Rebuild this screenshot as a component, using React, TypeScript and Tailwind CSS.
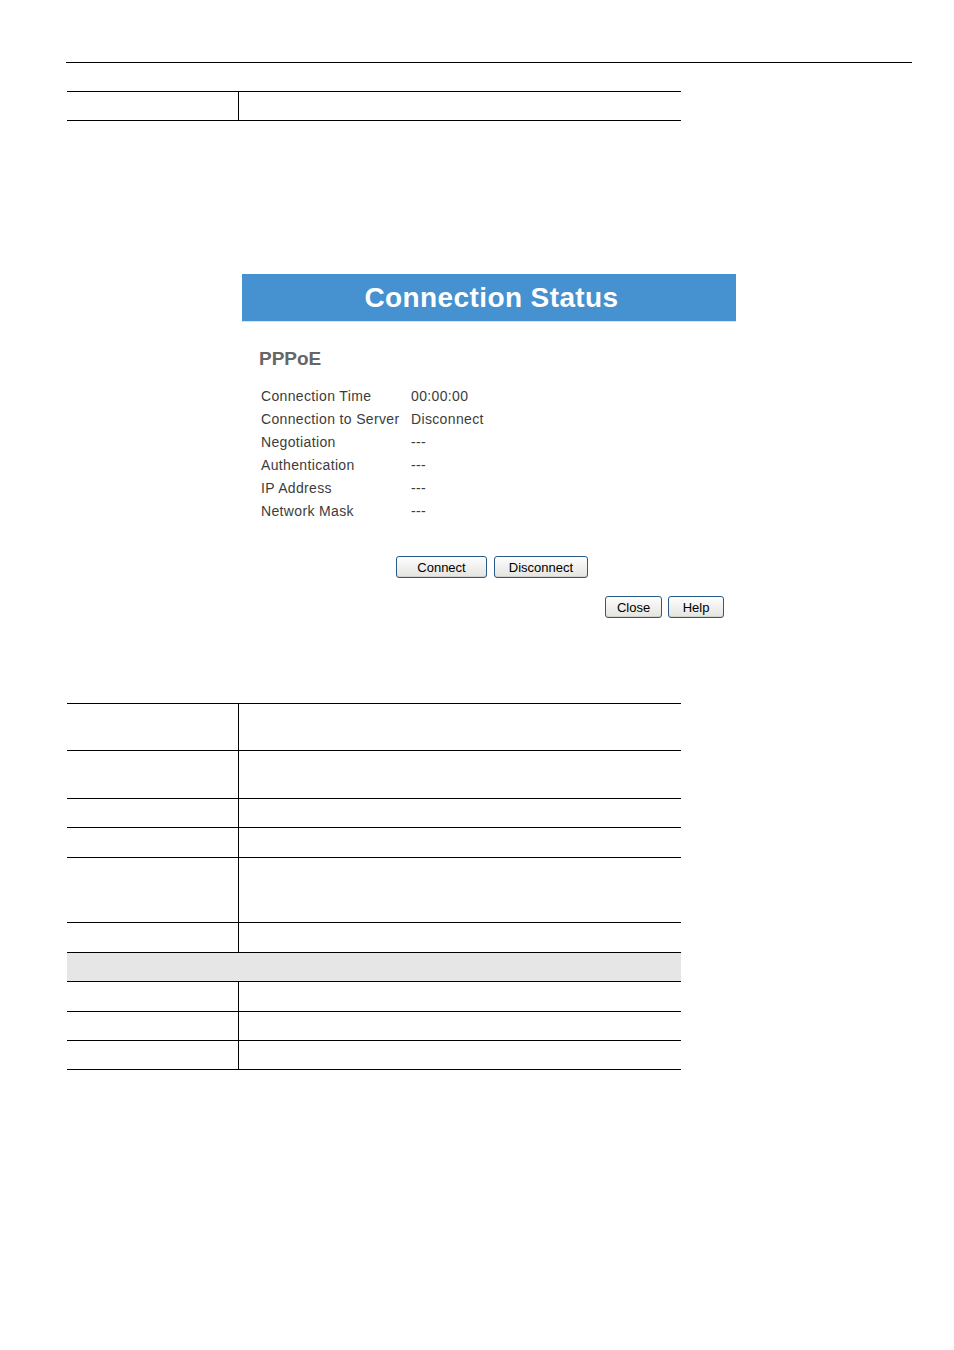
import React from 'react';

const rows: [string, string][] = [
  ['Connection Time', '00:00:00'],
  ['Connection to Server', 'Disconnect'],
  ['Negotiation', '---'],
  ['Authentication', '---'],
  ['IP Address', '---'],
  ['Network Mask', '---'],
];

const lowerRows = [
  { h: 'h-[47px]' },
  { h: 'h-[48px]' },
  { h: 'h-[29px]' },
  { h: 'h-[30px]' },
  { h: 'h-[65px]' },
  { h: 'h-[30px]' },
  { h: 'h-[29px]', gray: true },
  { h: 'h-[30px]' },
  { h: 'h-[29px]' },
  { h: 'h-[29px]' },
];

function Btn({ label, w }: { label: string; w: string }) {
  return (
    <button
      className={`${w} h-[22px] rounded-[3px] border border-[#2a5a8a] bg-gradient-to-b from-[#fdfdfd] to-[#e4e4e0] text-[13px] leading-none text-black shadow-[inset_0_-1px_0_#d0d0cc]`}
    >
      {label}
    </button>
  );
}

export default function App() {
  return (
    <div className="w-[954px] min-h-[1350px] bg-white pt-[62px] font-['Liberation_Sans',Arial,sans-serif]">
      <div className="ml-[66px] w-[846px] border-t border-black" />

      {/* upper table */}
      <div className="ml-[67px] mt-[28px] w-[614px] border-y border-black flex h-[30px]">
        <div className="w-[172px] border-r border-black" />
        <div className="flex-1" />
      </div>

      {/* dialog */}
      <div className="ml-[242px] mt-[153px] w-[494px]">
        <div className="h-[48px] bg-[#4691cf] border-b border-[#cfe3f3] flex items-center justify-center pl-[5px]">
          <span className="text-white font-bold text-[28px] tracking-[0.4px] leading-none">Connection Status</span>
        </div>

        <div className="pl-[17px] pt-[27px] text-[19px] font-bold text-[#666666] leading-none">PPPoE</div>

        <div className="pl-[19px] pt-[17px] text-[14px] text-[#3c3c3c] tracking-[0.35px]">
          {rows.map(([k, v]) => (
            <div key={k} className="flex h-[23px] items-center">
              <div className="w-[150px]">{k}</div>
              <div>{v}</div>
            </div>
          ))}
        </div>

        <div className="flex justify-center gap-[7px] mt-[33px] pl-[6px]">
          <Btn label="Connect" w="w-[91px]" />
          <Btn label="Disconnect" w="w-[94px]" />
        </div>

        <div className="flex justify-end gap-[6px] mt-[18px] pr-[12px]">
          <Btn label="Close" w="w-[57px]" />
          <Btn label="Help" w="w-[56px]" />
        </div>
      </div>

      {/* lower table */}
      <div className="ml-[67px] mt-[85px] w-[614px] border-t border-black">
        {lowerRows.map((r, i) => (
          <div key={i} className={`flex border-b border-black ${r.h} ${r.gray ? 'bg-[#e6e6e6]' : ''}`}>
            {!r.gray && <div className="w-[172px] border-r border-black" />}
            <div className="flex-1" />
          </div>
        ))}
      </div>
    </div>
  );
}
